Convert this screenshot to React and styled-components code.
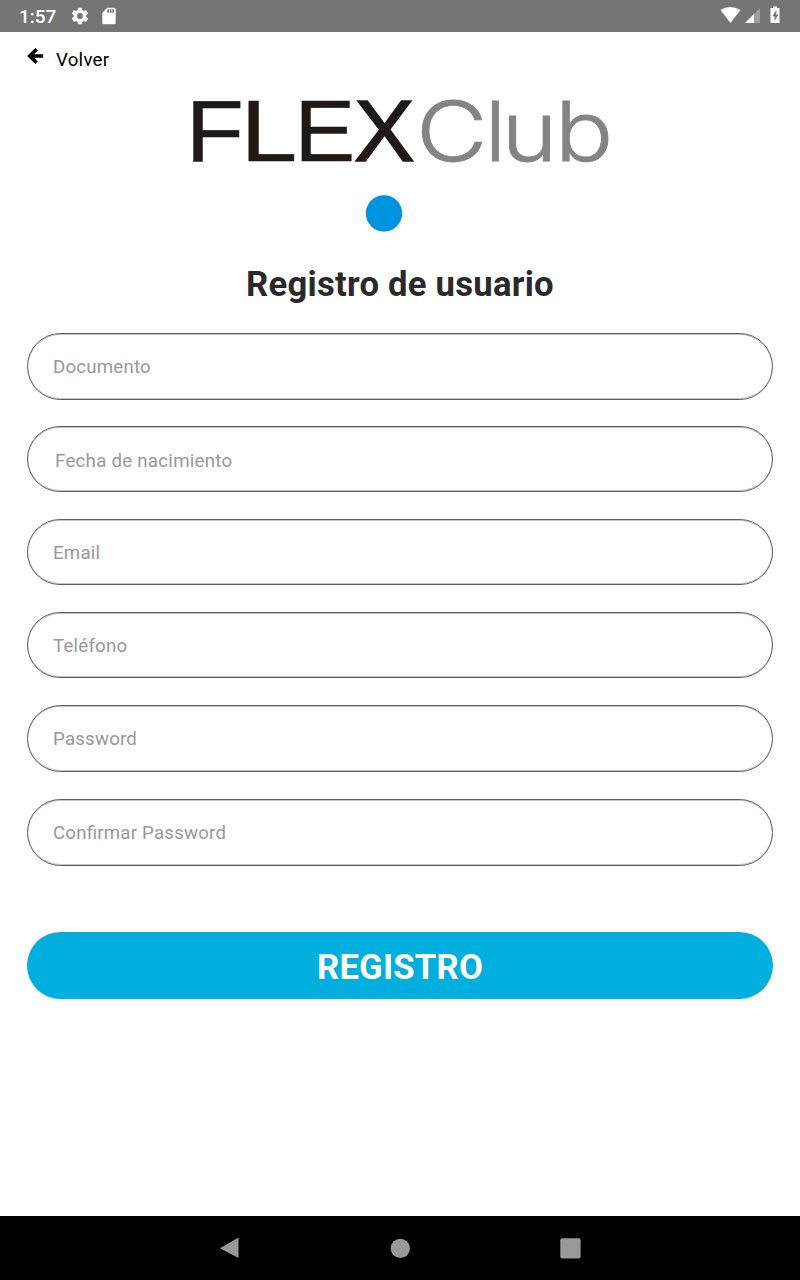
import React from "react";
import styled, { createGlobalStyle } from "styled-components";

const GlobalStyle = createGlobalStyle`
  * { box-sizing: border-box; }
  body { margin: 0; background: #fff; font-family: Roboto, "Liberation Sans", sans-serif; }
`;
const Screen = styled.div`
  width: 800px;
  height: 1280px;
  display: flex;
  flex-direction: column;
  overflow: hidden;
`;
const StatusBar = styled.header`
  height: 32px;
  flex: none;
  display: flex;
  justify-content: space-between;
  background: #757575;
  color: #fff;
`;
const StatusGroup = styled.div`
  display: flex;
  align-items: center;
  gap: 9px;
  padding: 0 19px;
`;
const Clock = styled.span`
  font-size: 19px;
  font-weight: 500;
  line-height: 32px;
  width: 42px;
  padding-top: 1px;
`;
const BackLink = styled.a`
  height: 54px;
  flex: none;
  display: flex;
  align-items: flex-start;
  padding: 15px 27px 0;
  gap: 12px;
  color: #000;
  font-size: 18.67px;
  line-height: 26px;
  letter-spacing: 0.25px;
`;
const Logo = styled.svg`
  display: block;
  flex: none;
  margin: 0 auto;
  overflow: visible;
`;
const Loader = styled.svg`
  display: block;
  flex: none;
  margin: 23px auto 0;
`;
const Title = styled.h1`
  flex: none;
  margin: 30px 0 0;
  height: 71px;
  line-height: 44px;
  font-size: 34.67px;
  letter-spacing: 0.24px;
  font-weight: 700;
  text-align: center;
  color: #2a2a2a;
`;
const Form = styled.form`
  flex: 1;
  display: flex;
  flex-direction: column;
  padding: 0 27px;
`;
const Field = styled.div`
  height: ${(p) => p.$height}px;
  flex: none;
  display: flex;
  align-items: center;
  margin-bottom: ${(p) => p.$gap || 27}px;
  padding: ${(p) => (p.$date ? "3px 27px 0" : "1px 25px 0")};
  border: 1px solid #5c5c5c;
  border-radius: 34px;
  box-shadow: inset 0 1px 0 #c6c6c6, inset 0 -1px 0 #c6c6c6;
  color: #999;
  font-size: 18.67px;
  letter-spacing: ${(p) => (p.$date ? 0.27 : 0.21)}px;
  font-feature-settings: "liga" 1;
`;
const Submit = styled.button`
  height: 67px;
  flex: none;
  margin-top: 39px;
  padding: 3px 0 0;
  border: 0;
  border-radius: 34px;
  background: #00afdd;
  color: #fff;
  font: 700 34.67px Roboto, "Liberation Sans", sans-serif;
  letter-spacing: 0.2px;
`;
const NavBar = styled.nav`
  height: 64px;
  flex: none;
  display: flex;
  align-items: center;
  justify-content: center;
  gap: 146px;
  background: #000;
`;

const fields = [
  { label: "Documento", height: 67, gap: 26 },
  { label: "Fecha de nacimiento", height: 66, date: true },
  { label: "Email", height: 66 },
  { label: "Teléfono", height: 66 },
  { label: "Password", height: 67 },
  { label: "Confirmar Password", height: 67 },
];

const NavIcon = ({ children }) => (
  <svg width="24" height="24" viewBox="0 0 24 24" fill="#999">{children}</svg>
);

export default function App() {
  return (
    <Screen>
      <GlobalStyle />
      <StatusBar>
        <StatusGroup>
          <Clock>1:57</Clock>
          <svg width="20" height="20" viewBox="0 0 24 24" fill="#fff">
            <path d="M19.43 12.98c.04-.32.07-.64.07-.98s-.03-.66-.07-.98l2.11-1.65c.19-.15.24-.42.12-.64l-2-3.46c-.12-.22-.39-.3-.61-.22l-2.49 1c-.52-.4-1.08-.73-1.69-.98l-.38-2.65A.49.49 0 0 0 14 2h-4c-.25 0-.46.18-.49.42l-.38 2.65c-.61.25-1.17.59-1.69.98l-2.49-1c-.23-.09-.49 0-.61.22l-2 3.46c-.13.22-.07.49.12.64l2.11 1.65c-.04.32-.07.65-.07.98s.03.66.07.98l-2.11 1.65c-.19.15-.24.42-.12.64l2 3.46c.12.22.39.3.61.22l2.49-1c.52.4 1.08.73 1.69.98l.38 2.65c.03.24.24.42.49.42h4c.25 0 .46-.18.49-.42l.38-2.65c.61-.25 1.17-.59 1.69-.98l2.49 1c.23.09.49 0 .61-.22l2-3.46c.12-.22.07-.49-.12-.64zM12 15.5a3.5 3.5 0 1 1 0-7 3.5 3.5 0 0 1 0 7z" />
          </svg>
          <svg width="20" height="20" viewBox="0 0 24 24" fill="#fff">
            <path d="M18 2h-8L4.02 8 4 20c0 1.1.9 2 2 2h12c1.1 0 2-.9 2-2V4c0-1.1-.9-2-2-2z" />
            <path d="M10 4h2v4h-2zM13 4h2v4h-2zM16 4h2v4h-2z" fill="#757575" />
          </svg>
        </StatusGroup>
        <StatusGroup>
          <svg width="62" height="32" viewBox="0 0 62 32" fill="#fff">
            <path d="M1.5 10Q11 3.8 21.5 10L11.5 23z" />
            <path d="M41 8v15H26z" fillOpacity=".3" />
            <path d="M35 14v9h-9z" />
            <path d="M54 6.5h4V8h2.5v15h-9V8H54z" />
            <path d="M57.5 10l-4.3 6.2h2.3V21l4-6.4h-2.4z" fill="#757575" />
          </svg>
        </StatusGroup>
      </StatusBar>
      <BackLink>
        <svg width="17" height="18" viewBox="0 0 17 18" fill="none" stroke="#000" strokeWidth="3.7">
          <path d="M9.6 2.2L2.8 9l6.8 6.8M3 9h13.2" />
        </svg>
        Volver
      </BackLink>
      <Logo width="424" height="86" viewBox="188 86 424 86">
        <g fill="#201a17" stroke="#201a17" strokeWidth="0.5" fontSize="86.5" fontFamily='"Liberation Sans", sans-serif'>
          <text transform="translate(185.7 160.7) scale(1.1 1)">F</text>
          <text transform="translate(240.4 160.7) scale(1.18 1)">L</text>
          <text transform="translate(294.6 160.7) scale(1.05 1)">E</text>
          <text strokeWidth="1.6" transform="translate(353.9 160.7) scale(1.05 1)">X</text>
        </g>
        <g fill="#848482" stroke="#848482" strokeWidth="0.8" fontSize="82.5" fontWeight="300" fontFamily='Inter, "Liberation Sans", sans-serif'>
          <text transform="translate(416 161) scale(1.19 1)">C</text>
          <text transform="translate(484.8 161) scale(1.1 1)">l</text>
          <text transform="translate(501.6 161) scale(1.15 1)">u</text>
          <text transform="translate(554.7 161) scale(1.18 1)">b</text>
        </g>
      </Logo>
      <Loader width="68" height="37" viewBox="0 0 68 37">
        <circle cx="18" cy="18.4" r="18.2" fill="#0093df" />
      </Loader>
      <Title>Registro de usuario</Title>
      <Form>
        {fields.map((f) => (
          <Field key={f.label} $date={f.date} $height={f.height} $gap={f.gap}>{f.label}</Field>
        ))}
        <Submit type="button">REGISTRO</Submit>
      </Form>
      <NavBar>
        <NavIcon><path d="M20.5 1.5v20.5L2 12.3z" /></NavIcon>
        <NavIcon><circle cx="12.3" cy="12.4" r="9.6" /></NavIcon>
        <NavIcon><rect x="2.3" y="2.3" width="20.3" height="20.3" rx="2" /></NavIcon>
      </NavBar>
    </Screen>
  );
}
